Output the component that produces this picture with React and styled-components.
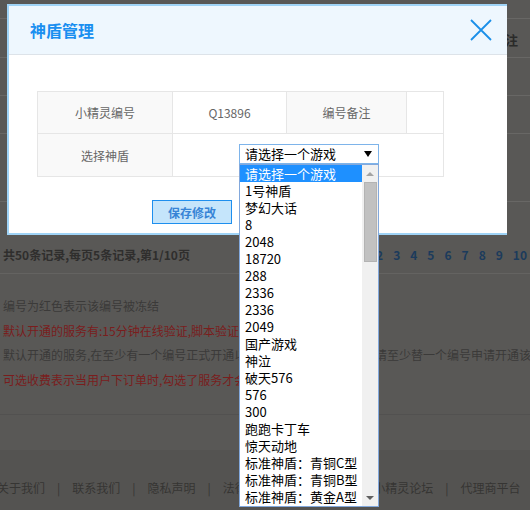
import React from "react";
import styled, { createGlobalStyle } from "styled-components";

const GlobalStyle = createGlobalStyle`
  html, body { margin: 0; padding: 0; }
  body {
    background: #595856;
    font-family: "Noto Sans CJK SC", "Noto Sans", sans-serif;
  }
  * { box-sizing: border-box; }
`;

const Stage = styled.div`
  position: relative;
  width: 530px;
  height: 510px;
  overflow: hidden;
  background: #595856;
`;

/* ---------- dimmed page behind the dialog ---------- */
const BgRow = styled.div`
  height: ${(p) => p.$h}px;
  border-bottom: 1px solid #686765;
  display: flex;
  align-items: center;
  justify-content: flex-end;
  padding-right: 12px;
`;

const BgHead = styled.span`
  font-size: 13px;
  font-weight: bold;
  color: #2a2a29;
  margin-top: 2px;
`;

const Pager = styled.div`
  height: 72px;
  border-bottom: 1px solid #646361;
  padding: 44px 3px 0 3px;
  display: flex;
  justify-content: space-between;
  align-items: flex-start;
  font-size: 12px;
  line-height: 18px;
  font-weight: bold;
`;

const PagerInfo = styled.span`
  color: #2f2e2d;
`;

const PageNums = styled.div`
  display: flex;
  gap: 10px;
  color: #1c3b5c;
`;

const Notes = styled.div`
  height: 141px;
  border-bottom: 1px solid #525150;
  padding: 20px 3px 0 3px;
  font-size: 12px;
  line-height: 24.7px;
  white-space: nowrap;
`;

const Note = styled.div`
  color: ${(p) => (p.$red ? "#7a1d1d" : "#3b3a39")};
`;

const Spacer = styled.div`
  height: 35px;
`;

const Footer = styled.div`
  height: 60px;
  background: #545351;
  padding-top: 29px;
  display: flex;
  gap: 12px;
  margin-left: -3px;
  font-size: 12px;
  line-height: 18px;
  color: #363533;
  white-space: nowrap;
`;

/* ---------- dialog ---------- */
const Modal = styled.div`
  position: absolute;
  left: 7px;
  top: 4px;
  width: 500px;
  background: #fff;
  border-top: 2px solid #9fd3f6;
  border-left: 2px solid #9fd3f6;
  border-bottom: 2px solid #9fd3f6;
`;

const Header = styled.div`
  height: 49px;
  background: #eef7fe;
  border-bottom: 1px solid #dde3e9;
  display: flex;
  align-items: center;
  justify-content: space-between;
  padding: 0 15px 1px 21px;
`;

const Title = styled.h2`
  margin: 0;
  font-size: 16px;
  font-weight: bold;
  color: #1a8ff0;
  line-height: 20px;
`;

const CloseBtn = styled.button`
  width: 22px;
  height: 22px;
  padding: 0;
  border: 0;
  background: none;
  display: flex;
  cursor: pointer;
`;

const Body = styled.div`
  padding: 36px 0 9px 28px;
`;

const Table = styled.table`
  border-collapse: collapse;
  width: 406px;
  table-layout: fixed;
`;

const Row = styled.tr`
  height: ${(p) => p.$h}px;
`;

const Cell = styled.td`
  border: 1px solid #e6e6e6;
  padding: 0;
  text-align: center;
  vertical-align: middle;
  font-size: 12px;
  color: #666;
  background: ${(p) => (p.$label ? "#f9f9f9" : "#fff")};
`;

const SelectWrap = styled.div`
  position: relative;
  width: 140px;
  margin: -2px auto 0;
  left: 1px;
`;

const SelectBox = styled.div`
  height: 20px;
  border: 1px solid #7eb4ea;
  background: #fff;
  display: flex;
  align-items: center;
  justify-content: space-between;
  padding: 0 6px 0 5px;
  font-size: 13px;
  line-height: 18px;
  color: #000;
  text-align: left;
`;

const List = styled.div`
  position: absolute;
  left: 0;
  top: 100%;
  width: 140px;
  border: 1px solid #82a8dc;
  background: #fff;
  display: flex;
  z-index: 5;
`;

const Items = styled.div`
  flex: 1;
  padding-bottom: 1px;
`;

const Item = styled.div`
  height: 17px;
  line-height: 17px;
  padding-left: 5px;
  font-size: 13px;
  white-space: nowrap;
  text-align: left;
  color: ${(p) => (p.$active ? "#fff" : "#000")};
  background: ${(p) => (p.$active ? "#1e90ff" : "transparent")};
`;

const Scrollbar = styled.div`
  width: 16px;
  background: #f0f0f0;
  display: flex;
  flex-direction: column;
  align-items: center;
`;

const ScrollArrow = styled.div`
  height: 17px;
  display: flex;
  align-items: center;
  justify-content: center;
`;

const Thumb = styled.div`
  width: 13px;
  height: 80px;
  background: #c1c1c1;
  border: 1px solid #b3b3b3;
`;

const ScrollFill = styled.div`
  flex: 1;
`;

const ButtonRow = styled.div`
  width: 406px;
  margin-top: 23px;
  display: flex;
  justify-content: center;
  gap: 16px;
`;

const Button = styled.button`
  width: 80px;
  height: 24px;
  border: 1px solid #1e8fee;
  background: #c5e5fb;
  color: #3784d6;
  font-family: inherit;
  font-size: 12px;
  font-weight: bold;
  padding: 0;
  cursor: pointer;
`;

const games = [
  "请选择一个游戏",
  "1号神盾",
  "梦幻大话",
  "8",
  "2048",
  "18720",
  "288",
  "2336",
  "2336",
  "2049",
  "国产游戏",
  "神泣",
  "破天576",
  "576",
  "300",
  "跑跑卡丁车",
  "惊天动地",
  "标准神盾：青铜C型",
  "标准神盾：青铜B型",
  "标准神盾：黄金A型",
];

const footerLinks = ["关于我们", "联系我们", "隐私声明", "法律声明", "网站地图", "小精灵论坛", "代理商平台"];

export default function App() {
  return (
    <>
      <GlobalStyle />
      <Stage>
        <div>
          <BgRow $h={19} />
          <BgRow $h={39}>
            <BgHead>编号备注</BgHead>
          </BgRow>
          <BgRow $h={38} />
          <BgRow $h={38} />
          <BgRow $h={68} />
          <Pager>
            <PagerInfo>共50条记录,每页5条记录,第1/10页</PagerInfo>
            <PageNums>
              {[1, 2, 3, 4, 5, 6, 7, 8, 9, 10].map((n) => (
                <span key={n}>{n}</span>
              ))}
            </PageNums>
          </Pager>
          <Notes>
            <Note>编号为红色表示该编号被冻结</Note>
            <Note $red>默认开通的服务有:15分钟在线验证,脚本验证,防破解</Note>
            <Note>
              {"默认开通的服务,在至少有一个编号正式开通以后才能正常使用此服务,\u00a0\u00a0请至少替一个编号申请开通该服务"}
            </Note>
            <Note $red>可选收费表示当用户下订单时,勾选了服务才会开通</Note>
          </Notes>
          <Spacer />
          <Footer>
            {footerLinks.map((l, i) => (
              <React.Fragment key={l}>
                {i > 0 && <span>|</span>}
                <span>{l}</span>
              </React.Fragment>
            ))}
          </Footer>
        </div>

        <Modal>
          <Header>
            <Title>神盾管理</Title>
            <CloseBtn aria-label="关闭">
              <svg width="22" height="22" viewBox="0 0 22 22">
                <path d="M1 1 L21 21 M21 1 L1 21" stroke="#1a8fe8" strokeWidth="1.8" fill="none" />
              </svg>
            </CloseBtn>
          </Header>
          <Body>
            <Table>
              <colgroup>
                <col style={{ width: 135 }} />
                <col style={{ width: 114 }} />
                <col style={{ width: 120 }} />
                <col style={{ width: 37 }} />
              </colgroup>
              <tbody>
                <Row $h={42}>
                  <Cell $label>小精灵编号</Cell>
                  <Cell>Q13896</Cell>
                  <Cell $label>编号备注</Cell>
                  <Cell></Cell>
                </Row>
                <Row $h={43}>
                  <Cell $label>选择神盾</Cell>
                  <Cell colSpan={3}>
                    <SelectWrap>
                      <SelectBox>
                        <span>请选择一个游戏</span>
                        <svg width="8" height="6" viewBox="0 0 8 6">
                          <path d="M0 0 H8 L4 6 Z" fill="#000" />
                        </svg>
                      </SelectBox>
                      <List>
                        <Items>
                          {games.map((g, i) => (
                            <Item key={i} $active={i === 0}>
                              {g}
                            </Item>
                          ))}
                        </Items>
                        <Scrollbar>
                          <ScrollArrow>
                            <svg width="8" height="4" viewBox="0 0 8 4">
                              <path d="M0 4 L4 0 L8 4 Z" fill="#a3a3a3" />
                            </svg>
                          </ScrollArrow>
                          <Thumb />
                          <ScrollFill />
                          <ScrollArrow>
                            <svg width="8" height="4" viewBox="0 0 8 4">
                              <path d="M0 0 L8 0 L4 4 Z" fill="#606060" />
                            </svg>
                          </ScrollArrow>
                        </Scrollbar>
                      </List>
                    </SelectWrap>
                  </Cell>
                </Row>
              </tbody>
            </Table>
            <ButtonRow>
              <Button>保存修改</Button>
              <Button>取消</Button>
            </ButtonRow>
          </Body>
        </Modal>
      </Stage>
    </>
  );
}
